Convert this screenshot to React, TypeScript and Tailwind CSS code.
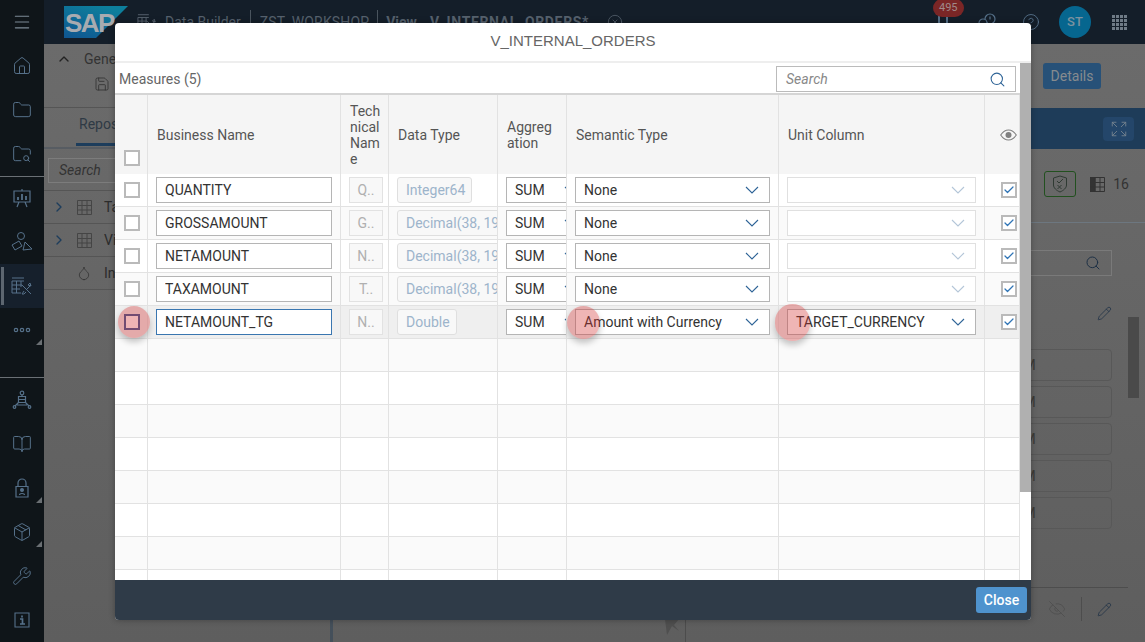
import { ReactNode } from "react";
import {
  Menu,
  Home,
  Folder,
  FolderSearch,
  BookOpen,
  Package,
  Wrench,
  ChevronUp,
  ChevronRight,
  Save,
  Search,
  EyeOff,
  Pencil,
  Droplet,
  CircleHelp,
  CircleX,
  Expand,
  Check,
} from "lucide-react";

const rows = [
  { name: "QUANTITY", tech: "Q..", type: "Integer64", semantic: "None", unit: "" },
  { name: "GROSSAMOUNT", tech: "G..", type: "Decimal(38, 19)", semantic: "None", unit: "" },
  { name: "NETAMOUNT", tech: "N..", type: "Decimal(38, 19)", semantic: "None", unit: "" },
  { name: "TAXAMOUNT", tech: "T..", type: "Decimal(38, 19)", semantic: "None", unit: "" },
  { name: "NETAMOUNT_TG", tech: "N..", type: "Double", semantic: "Amount with Currency", unit: "TARGET_CURRENCY" },
];

const emptyRows = [0, 1, 2, 3, 4, 5, 6, 7];
const sideColor = "#56718a";

function DataBuilderIcon({ size = 22, color = sideColor }: { size?: number; color?: string }) {
  return (
    <svg width={size} height={size} viewBox="0 0 22 22" fill="none" stroke={color} strokeWidth="1">
      <path d="M1 3h12M1 6h12M1 10h10M1 14h8M1 18h9M1 6v12M5.5 6v12M10 6v6" />
      <path d="M11 10l9 9M20 10l-4 4M13 16l-2 3 2 0 2-2M19 8l1 3-3-1z" />
    </svg>
  );
}

function ShapesIcon() {
  return (
    <svg width="22" height="22" viewBox="0 0 22 22" fill="none" stroke={sideColor} strokeWidth="1">
      <circle cx="10" cy="5" r="3.5" />
      <path d="M1 14l7-4 3 5-7 4zM14 11l7 7-9 1z" />
    </svg>
  );
}

function BoardIcon() {
  return (
    <svg width="20" height="20" viewBox="0 0 20 20" fill="none" stroke={sideColor} strokeWidth="1.2">
      <path d="M2 3h16v11H2zM10 1v2M7 14l-2 5M13 14l2 5" />
      <path d="M6 12V9M10 12V6M14 12V8" strokeWidth="1.8" />
    </svg>
  );
}

function DotsIcon() {
  return (
    <svg width="18" height="6" viewBox="0 0 18 6" fill="none" stroke={sideColor} strokeWidth="1.2">
      <circle cx="3" cy="3" r="1.7" />
      <circle cx="9" cy="3" r="1.7" />
      <circle cx="15" cy="3" r="1.7" />
    </svg>
  );
}

function NetworkIcon() {
  return (
    <svg width="20" height="20" viewBox="0 0 20 20" fill="none" stroke={sideColor} strokeWidth="1.2">
      <circle cx="10" cy="3" r="1.8" />
      <path d="M6.5 6.5h7v6h-7zM6.5 9.5h7M10 5v1.5M6.5 12.5l-3.5 3.5M13.5 12.5l3.5 3.5M5 15h10" />
      <circle cx="2.5" cy="17" r="1.3" />
      <circle cx="17.5" cy="17" r="1.3" />
    </svg>
  );
}

function LockIcon() {
  return (
    <svg width="20" height="20" viewBox="0 0 20 20" fill="none" stroke={sideColor} strokeWidth="1.2">
      <path d="M4 8.5h12V19H4zM6 8.5V5a4 4 0 0 1 8 0v3.5" />
      <circle cx="10" cy="12" r="1.4" fill={sideColor} />
      <path d="M7.5 17c0-2 5-2 5 0" />
    </svg>
  );
}

function InfoIcon() {
  return (
    <svg width="16" height="16" viewBox="0 0 16 16" fill="none" stroke={sideColor} strokeWidth="1.1">
      <path d="M1 1h14v14H1z" />
      <path d="M6 7h2.5v5M6 12h5M8 3.5v2" strokeWidth="1.7" />
    </svg>
  );
}

function ShieldIcon() {
  return (
    <svg width="16" height="18" viewBox="0 0 16 18" fill="none" stroke="#2f3a33" strokeWidth="1">
      <path d="M8 1l6.5 2v7c0 3-3 5.5-6.500 7-3.500-1.500-6.500-4-6.500-7V3z" />
      <path d="M5 6l2 2 4-4M5.5 10l4 4M9.5 10l-4 4" />
    </svg>
  );
}

function TableIcon({ dark }: { dark?: boolean }) {
  return (
    <svg width="15" height="15" viewBox="0 0 15 15" fill="none" stroke={dark ? "#333" : "#454545"} strokeWidth="1">
      {dark && <path d="M0 0h5v15H0z" fill="#333" />}
      <path d="M.5.5h14v14H.5zM5 .5v14M10 .5v14M.5 5.5h14M.5 10h14" />
    </svg>
  );
}

function AppsIcon() {
  const cells = [0, 1, 2, 3];
  return (
    <svg width="15" height="15" viewBox="0 0 15 15" fill="#6f7b86">
      {cells.map((y) => cells.map((x) => <rect key={`${x}-${y}`} x={x * 4} y={y * 4} width="3" height="3" />))}
    </svg>
  );
}

function ChatIcon() {
  return (
    <svg width="18" height="18" viewBox="0 0 18 18" fill="none" stroke="#56718a" strokeWidth="1.2">
      <circle cx="12" cy="6" r="5" />
      <circle cx="5" cy="10" r="4" fill="#141e29" />
      <path d="M12 3.500v3" />
    </svg>
  );
}

function EyeIcon() {
  return (
    <svg width="17" height="12" viewBox="0 0 17 12" fill="none" stroke="#808080" strokeWidth="1.1">
      <path d="M.7 6C3 2.500 5.500 1 8.500 1s5.500 1.500 7.800 5c-2.300 3.500-4.800 5-7.800 5S3 9.500.7 6z" />
      <circle cx="8.500" cy="6" r="3" fill="#808080" stroke="none" />
    </svg>
  );
}

function SapLogo() {
  return (
    <svg width="64" height="32" viewBox="0 0 64 32">
      <defs>
        <linearGradient id="sapGrad" x1="0" y1="1" x2="0.6" y2="0">
          <stop offset="0" stopColor="#0f5590" />
          <stop offset="1" stopColor="#0d7f9c" />
        </linearGradient>
      </defs>
      <path d="M0 0h64L32 32H0z" fill="url(#sapGrad)" />
      <text x="1" y="26" fontFamily="Liberation Sans" fontWeight="700" fontSize="26" letterSpacing="-1.5" fill="#a7abb0">
        SAP
      </text>
    </svg>
  );
}

function SideItem({ children, active, corner }: { children: ReactNode; active?: boolean; corner?: boolean }) {
  return (
    <div className={`relative flex h-11 w-11 shrink-0 items-center justify-center ${active ? "bg-[#16202c]" : ""}`}>
      {active && <div className="absolute left-[1px] top-[3px] h-[38px] w-[3px] bg-[#5d6670]" />}
      {children}
      {corner && (
        <div className="absolute bottom-[7px] right-[2px] h-0 w-0 border-b-[6px] border-l-[6px] border-b-[#6a6f73] border-l-transparent" />
      )}
    </div>
  );
}

function Sidebar() {
  const ic = { size: 20, color: sideColor, strokeWidth: 1.2 };
  return (
    <aside className="flex w-11 shrink-0 flex-col bg-[#0f1519]">
      <SideItem><Menu size={20} color="#7d8a96" strokeWidth={1.3} /></SideItem>
      <SideItem><Home {...ic} /></SideItem>
      <SideItem><Folder {...ic} /></SideItem>
      <SideItem><FolderSearch {...ic} /></SideItem>
      <div className="-my-[0.5px] h-px w-full bg-[#6a7075]" />
      <SideItem><BoardIcon /></SideItem>
      <SideItem><ShapesIcon /></SideItem>
      <SideItem active><DataBuilderIcon /></SideItem>
      <SideItem corner><DotsIcon /></SideItem>
      <div className="flex-1" />
      <div className="h-px w-full bg-[#6a7075]" />
      <SideItem><NetworkIcon /></SideItem>
      <SideItem><BookOpen {...ic} /></SideItem>
      <SideItem corner><LockIcon /></SideItem>
      <SideItem corner><Package {...ic} /></SideItem>
      <SideItem><Wrench {...ic} /></SideItem>
      <SideItem><InfoIcon /></SideItem>
    </aside>
  );
}

function TopBar() {
  return (
    <header className="flex h-11 shrink-0 items-center bg-[#141e29] pl-5 text-sm text-[#56616d]">
      <SapLogo />
      <div className="ml-[9px] flex items-center gap-2">
        <DataBuilderIcon size={20} color="#5a6672" />
        <span>Data Builder</span>
      </div>
      <div className="mx-[9px] h-6 w-px bg-[#4a545e]" />
      <span className="tracking-[0.15px]">ZST_WORKSHOP</span>
      <div className="mx-2 h-6 w-px bg-[#4a545e]" />
      <span className="font-bold">View</span>
      <span className="ml-[13px] font-bold tracking-[0.65px]">V_INTERNAL_ORDERS*</span>
      <CircleX className="ml-[18px]" size={16} color="#56616d" strokeWidth={1.2} />
      <div className="flex-1" />
      <div className="relative mr-[30px] h-5 w-[10px] border-x-2 border-[#56718a]">
        <div className="absolute -left-[7px] -top-[13px] rounded-full bg-[#7a2626] px-[6px] text-[11px] leading-[18px] text-[#a08a8a]">
          495
        </div>
      </div>
      <div className="mr-[26px]">
        <ChatIcon />
      </div>
      <CircleHelp className="mr-[19px]" size={18} color="#56718a" strokeWidth={1.2} />
      <div className="mr-[21px] flex h-8 w-8 items-center justify-center rounded-full bg-[#06668f] text-[13px] font-medium text-[#7c929f]">
        ST
      </div>
      <div className="mr-[18px]">
        <AppsIcon />
      </div>
    </header>
  );
}

function LeftPanel() {
  const tree = ["Tables", "Views", "Intelligent Lookups"];
  return (
    <section className="flex w-[289px] shrink-0 flex-col border-r-[3px] border-[#444f5a]">
      <div className="h-[64px] border-b border-[#555] pl-3 text-sm text-[#333]">
        <div className="flex items-center gap-3 pt-[5px]">
          <ChevronUp size={16} color="#222" />
          <span>General</span>
        </div>
        <Save className="ml-[38px] mt-[7px]" size={16} color="#333" strokeWidth={1.3} />
      </div>
      <div className="h-[41px] border-b-2 border-[#575c62] pl-8 text-sm text-[#2f3a45]">
        <div className="w-fit border-b-[3px] border-[#1d3d5c] pb-[9px] pl-[3px] pr-8 pt-[6px]">Repository</div>
      </div>
      <div className="h-[42px] border-b border-[#555] pl-[4px] pt-[9px]">
        <div className="h-[25px] w-[200px] border border-[#7c7c7c] pl-[10px] text-sm italic leading-[23px] text-[#333]">Search</div>
      </div>
      {tree.map((label, i) => (
        <div key={label} className="flex h-[33px] items-center border-b border-[#555] pl-[7px] text-sm text-[#2c2c2c]">
          {i < 2 ? <ChevronRight size={16} color="#1d3d5c" /> : <div className="w-4" />}
          <div className="ml-[9px] flex w-4 justify-center">
            {i < 2 ? <TableIcon /> : <Droplet size={16} color="#333" strokeWidth={1.2} />}
          </div>
          <span className="ml-[12px]">{label}</span>
        </div>
      ))}
    </section>
  );
}

function RightPanel() {
  return (
    <section className="flex w-[460px] shrink-0 flex-col border-l border-[#4c4c4c]">
      <div className="flex h-16 shrink-0 justify-end pr-11 pt-[19px]">
        <div className="flex h-[26px] w-[58px] items-center justify-center rounded-[3px] bg-[#275178] text-sm text-[#868b8f]">Details</div>
      </div>
      <div className="flex h-[41px] shrink-0 items-center justify-end bg-[#1e3c59] pr-[11px]">
        <div className="flex h-6 w-[31px] items-center justify-center rounded-sm bg-[#24466a]">
          <Expand size={18} color="#75828e" strokeWidth={1.2} />
        </div>
      </div>
      <div className="flex h-[74px] shrink-0 items-center justify-end border-b border-[#6d7780] pb-[3px] pr-4">
        <div className="flex h-[26px] w-8 items-center justify-center rounded-[3px] border border-[#22501f]">
          <ShieldIcon />
        </div>
        <div className="ml-[14px]">
          <TableIcon dark />
        </div>
        <span className="ml-2 text-sm text-[#333]">16</span>
      </div>
      <div className="flex flex-1 justify-end">
        <div className="flex w-[300px] flex-col items-end">
          <div className="mt-[27px] flex h-[26px] w-full items-center justify-end border border-[#7a7a7a] pr-[10px]">
            <Search size={16} color="#1d3045" strokeWidth={1.5} />
          </div>
          <Pencil className="mr-[0px] mt-[30px]" size={15} color="#1d3045" strokeWidth={1.2} />
          <div className="mt-[28px] flex w-full flex-col gap-[5px]">
            {[0, 1, 2, 3, 4].map((i) => (
              <div key={i} className="h-8 rounded-sm border border-[#585858] pl-[193px] text-sm leading-[30px] text-[#3d3b37]">
                SUM
              </div>
            ))}
          </div>
          <div className="mt-[58px] h-px w-[316px] self-start bg-[#4d4d4d]" />
          <div className="mt-[9px] flex items-center">
            <EyeOff size={18} color="#4e4e4e" strokeWidth={1.1} />
            <div className="mx-[15px] h-6 w-px bg-[#4d4d4d]" />
            <Pencil size={15} color="#1d3045" strokeWidth={1.2} />
          </div>
        </div>
        <div className="ml-4 w-[17px] pr-[6px]">
          <div className="ml-0 mt-[94px] h-[81px] w-[11px] bg-[#4a4a4a]" />
        </div>
      </div>
    </section>
  );
}

function Background() {
  return (
    <div className="flex h-full w-full">
      <Sidebar />
      <div className="flex min-w-0 flex-1 flex-col">
        <TopBar />
        <div className="flex min-h-0 flex-1 bg-gradient-to-b from-[#6b6b6b] to-[#5e5e5e]">
          <LeftPanel />
          <div className="flex flex-1 flex-col items-end justify-end pb-[7px] pr-[4px]">
            <svg width="18" height="16" viewBox="0 0 18 16">
              <path d="M2 0l14 0-5 6 5 6-7-5-5 9z" fill="#4f4f4f" />
            </svg>
          </div>
          <RightPanel />
        </div>
      </div>
    </div>
  );
}

function Chevron({ light }: { light?: boolean }) {
  return (
    <svg width="14" height="8" viewBox="0 0 14 8" fill="none" stroke={light ? "#b4c6d8" : "#2f6497"} strokeWidth="1.1">
      <path d="M1 1l6 6 6-6" />
    </svg>
  );
}

function CheckBox({ checked, hot }: { checked?: boolean; hot?: boolean }) {
  return (
    <div
      className={`flex h-4 w-4 items-center justify-center border-2 bg-white ${hot ? "border-[#3f5f98]" : "border-[#bababa]"}`}
    >
      {checked && <Check size={14} color="#2f74b5" strokeWidth={2.5} />}
    </div>
  );
}

function SelectBox({ label, width, disabled }: { label: string; width: string; disabled?: boolean }) {
  return (
    <div
      className={`flex h-[26px] shrink-0 items-center justify-between bg-white pl-2 pr-[10px] text-sm text-[#333] border ${width} ${disabled ? "border-[#e0e0e0]" : "border-[#b5b5b5]"}`}
    >
      <span className="whitespace-nowrap">{label}</span>
      <Chevron light={disabled} />
    </div>
  );
}

// translucent click marker painted over a table cell
function Hotspot({ className }: { className: string }) {
  return (
    <div
      className={`pointer-events-none absolute z-10 rounded-full bg-[#d22c2c]/35 shadow-[0_4px_6px_rgba(0,0,0,0.22)] ${className}`}
    />
  );
}

const cell = "relative h-[33px] border-b border-r border-[#e2e2e2] p-0 align-middle";
const head = "border-r border-[#e2e2e2] bg-[#f5f5f5] p-0 align-middle text-sm font-normal leading-4 text-[#555] text-left";

function MeasuresTable() {
  return (
    <table className="w-[905px] table-fixed border-separate border-spacing-0">
      <colgroup>
        <col className="w-[33px]" />
        <col className="w-[193px]" />
        <col className="w-[48px]" />
        <col className="w-[109px]" />
        <col className="w-[69px]" />
        <col className="w-[212px]" />
        <col className="w-[206px]" />
        <col className="w-[35px]" />
      </colgroup>
      <thead>
        <tr className="h-[79px]">
          <th className={head}>
            <div className="flex h-[79px] items-end pb-2 pl-[9px]">
              <CheckBox />
            </div>
          </th>
          <th className={`${head} pl-[9px]`}>Business Name</th>
          <th className={`${head} pl-[9px]`}>
            Tech<br />nical<br />Nam<br />e
          </th>
          <th className={`${head} pl-[9px]`}>Data Type</th>
          <th className={`${head} break-all pl-[9px] pr-[14px]`}>Aggregation</th>
          <th className={`${head} pl-[9px]`}>Semantic Type</th>
          <th className={`${head} pl-[9px]`}>Unit Column</th>
          <th className={head}>
            <div className="flex justify-end pr-[2px]">
              <EyeIcon />
            </div>
          </th>
        </tr>
      </thead>
      <tbody>
        {rows.map((row, i) => {
          const selected = i === 4;
          const bg = selected ? "bg-[#efefef]" : i % 2 === 1 ? "bg-[#fafafa]" : "bg-white";
          return (
            <tr key={row.name} className={bg}>
              <td className={cell}>
                <div className="flex justify-center pl-px">
                  <CheckBox hot={selected} />
                </div>
                {selected && <Hotspot className="left-[3px] top-0 h-8 w-8" />}
              </td>
              <td className={cell}>
                <input
                  readOnly
                  value={row.name}
                  className={`ml-2 block h-[26px] w-[176px] border bg-white pl-2 text-sm text-[#333] outline-none ${selected ? "border-[#3a76b0]" : "border-[#b5b5b5]"}`}
                />
              </td>
              <td className={cell}>
                <div className="ml-2 flex h-[26px] w-[34px] items-center justify-center border border-[#e2e2e2] bg-[#f8f8f8] pb-px text-sm text-[#b0b0b0]">
                  {row.tech}
                </div>
              </td>
              <td className={cell}>
                <div className="overflow-hidden">
                  <div className="ml-2 flex h-[26px] w-fit items-center whitespace-nowrap rounded-[3px] border border-[#dfdfdf] bg-[#f8f8f8] pl-2 pr-[6px] text-sm text-[#9db4cb]">
                    {row.type}
                  </div>
                </div>
              </td>
              <td className={cell}>
                <div className="overflow-hidden pl-2">
                  <SelectBox label="SUM" width="w-[83px]" />
                </div>
              </td>
              <td className={cell}>
                <div className="pl-2">
                  <SelectBox label={row.semantic} width="w-[195px]" />
                </div>
                {selected && <Hotspot className="left-0 top-0 h-[33px] w-[33px]" />}
              </td>
              <td className={cell}>
                <div className="pl-2">
                  <SelectBox label={row.unit} width="w-[189px]" disabled={!selected} />
                </div>
                {selected && <Hotspot className="-left-1 -top-[2px] h-[37px] w-[35px]" />}
              </td>
              <td className={cell}>
                <div className="flex justify-end pr-[2px]">
                  <CheckBox checked />
                </div>
              </td>
            </tr>
          );
        })}
        {emptyRows.map((i) => (
          <tr key={i} className={i % 2 === 0 ? "bg-[#fafafa]" : "bg-white"}>
            {[0, 1, 2, 3, 4, 5, 6, 7].map((c) => (
              <td key={c} className={cell} />
            ))}
          </tr>
        ))}
      </tbody>
    </table>
  );
}

function MeasuresDialog() {
  return (
    <div className="absolute left-[115px] top-[23px] z-20 flex h-[597px] w-[916px] flex-col overflow-hidden rounded-[4px] bg-white shadow-[0_0_6px_rgba(0,0,0,0.3)]">
      <div className="flex h-10 shrink-0 items-center justify-center border-b-2 border-[#eeeeee] pb-[2px] font-['Liberation_Sans',sans-serif] text-[15px] text-[#666]">
        V_INTERNAL_ORDERS
      </div>
      <div className="flex min-h-0 flex-1">
        <div className="w-[905px] shrink-0 overflow-hidden">
          <div className="flex h-[32px] items-center justify-between border-b-2 border-[#d5d5d5] pl-1 pr-[4px] pt-[2px]">
            <span className="text-sm text-[#666]">Measures (5)</span>
            <div className="flex h-[26px] w-[240px] items-center justify-between border border-[#bbb] pl-[9px] pr-[9px]">
              <span className="text-sm italic text-[#888]">Search</span>
              <Search size={17} color="#2f6497" strokeWidth={1.5} />
            </div>
          </div>
          <MeasuresTable />
        </div>
        <div className="w-[11px] shrink-0">
          <div className="h-[429px] w-full bg-[#b0b0b0]" />
        </div>
      </div>
      <div className="flex h-10 shrink-0 items-center justify-end bg-[#2f3b48] pr-1">
        <button className="h-[26px] w-[51px] rounded-[3px] bg-[#4f93ce] text-sm font-medium text-white">Close</button>
      </div>
    </div>
  );
}

export default function App() {
  return (
    <div className="relative h-screen w-screen overflow-hidden font-['Roboto','Liberation_Sans',sans-serif]">
      <Background />
      <MeasuresDialog />
    </div>
  );
}
